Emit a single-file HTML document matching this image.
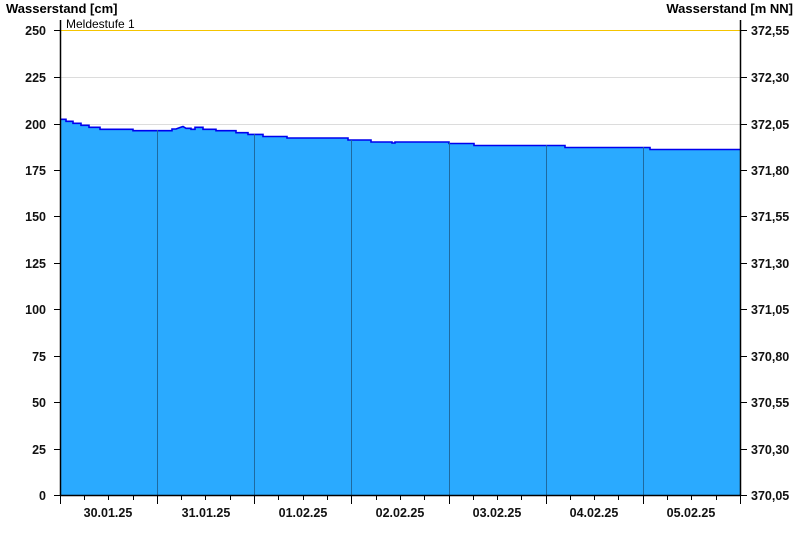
<!DOCTYPE html>
<html><head><meta charset="utf-8"><style>
html,body{margin:0;padding:0;background:#fff;}
svg{display:block;font-family:"Liberation Sans",Arial,sans-serif;}
</style></head><body>
<svg width="800" height="550" viewBox="0 0 800 550" xmlns="http://www.w3.org/2000/svg">
<g stroke="#dcdcdc" stroke-width="1">
<line x1="60" y1="77.5" x2="740" y2="77.5"/>
<line x1="60" y1="124.5" x2="740" y2="124.5"/>
</g>
<line x1="60" y1="30.5" x2="740" y2="30.5" stroke="#f5c400" stroke-width="1"/>
<text x="66" y="28" font-size="12" fill="#000">Meldestufe 1</text>
<path fill="#2aaaff" stroke="none" d="M60,495 L60,119.3 H66 V121.3 H73 V123.3 H81 V125.3 H89 V127.3 H100 V129.3 H133 V130.7 H172 V129 H176 L180,127.5 L183,126.5 L186,128.3 H191 V129.3 H195 V127.3 H203 V129.3 H216 V130.7 H236 V132.7 H248 V134.4 H263 V136.5 H287 V138 H348 V140 H371 V142 H392 V143 H395 V142 H449 V143.5 H474 V145.5 H565 V147.5 H650 V149.5 H740 V495 Z"/>
<path fill="none" stroke="#0000ee" stroke-width="1.6" d="M60,119.3 H66 V121.3 H73 V123.3 H81 V125.3 H89 V127.3 H100 V129.3 H133 V130.7 H172 V129 H176 L180,127.5 L183,126.5 L186,128.3 H191 V129.3 H195 V127.3 H203 V129.3 H216 V130.7 H236 V132.7 H248 V134.4 H263 V136.5 H287 V138 H348 V140 H371 V142 H392 V143 H395 V142 H449 V143.5 H474 V145.5 H565 V147.5 H650 V149.5 H740"/>
<g stroke="#1e6aa0" stroke-width="1">
<line x1="157.5" y1="130" x2="157.5" y2="495"/>
<line x1="254.5" y1="134" x2="254.5" y2="495"/>
<line x1="351.5" y1="140" x2="351.5" y2="495"/>
<line x1="449.5" y1="142" x2="449.5" y2="495"/>
<line x1="546.5" y1="145" x2="546.5" y2="495"/>
<line x1="643.5" y1="147" x2="643.5" y2="495"/>
</g>
<g stroke="#000" stroke-width="1.5">
<line x1="60.5" y1="20" x2="60.5" y2="495"/>
<line x1="740.5" y1="20" x2="740.5" y2="495"/>
<line x1="60" y1="495.5" x2="741" y2="495.5"/>
</g>
<g stroke="#000" stroke-width="1">
<path d="M54,30.5H60 M54,77.5H60 M54,124.5H60 M54,170.5H60 M54,216.5H60 M54,263.5H60 M54,309.5H60 M54,356.5H60 M54,402.5H60 M54,449.5H60 M54,495.5H60"/>
<path d="M741,30.5H747 M741,77.5H747 M741,124.5H747 M741,170.5H747 M741,216.5H747 M741,263.5H747 M741,309.5H747 M741,356.5H747 M741,402.5H747 M741,449.5H747 M741,495.5H747"/>
<path d="M60.5,495V504 M157.5,495V504 M254.5,495V504 M351.5,495V504 M449.5,495V504 M546.5,495V504 M643.5,495V504 M740.5,495V504"/>
<path d="M84.5,495V500 M108.5,495V500 M133.5,495V500 M181.5,495V500 M205.5,495V500 M230.5,495V500 M278.5,495V500 M303.5,495V500 M327.5,495V500 M376.5,495V500 M400.5,495V500 M424.5,495V500 M473.5,495V500 M497.5,495V500 M521.5,495V500 M570.5,495V500 M594.5,495V500 M618.5,495V500 M667.5,495V500 M691.5,495V500 M716.5,495V500"/>
</g>
<g font-size="13" font-weight="bold" fill="#000">
<text x="6" y="13">Wasserstand [cm]</text>
<text x="793" y="13" text-anchor="end">Wasserstand [m NN]</text>
</g>
<g font-size="12.5" font-weight="bold" fill="#111" text-anchor="end">
<text x="46" y="35">250</text><text x="46" y="82">225</text><text x="46" y="129">200</text><text x="46" y="175">175</text><text x="46" y="221">150</text><text x="46" y="268">125</text><text x="46" y="314">100</text><text x="46" y="361">75</text><text x="46" y="407">50</text><text x="46" y="454">25</text><text x="46" y="500">0</text>
</g>
<g font-size="12.5" font-weight="bold" fill="#111">
<text x="751" y="35">372,55</text><text x="751" y="82">372,30</text><text x="751" y="129">372,05</text><text x="751" y="175">371,80</text><text x="751" y="221">371,55</text><text x="751" y="268">371,30</text><text x="751" y="314">371,05</text><text x="751" y="361">370,80</text><text x="751" y="407">370,55</text><text x="751" y="454">370,30</text><text x="751" y="500">370,05</text>
</g>
<g font-size="12.5" font-weight="bold" fill="#111" text-anchor="middle">
<text x="108" y="517">30.01.25</text><text x="206" y="517">31.01.25</text><text x="303" y="517">01.02.25</text><text x="400" y="517">02.02.25</text><text x="497" y="517">03.02.25</text><text x="594" y="517">04.02.25</text><text x="691" y="517">05.02.25</text>
</g>
</svg>
</body></html>
